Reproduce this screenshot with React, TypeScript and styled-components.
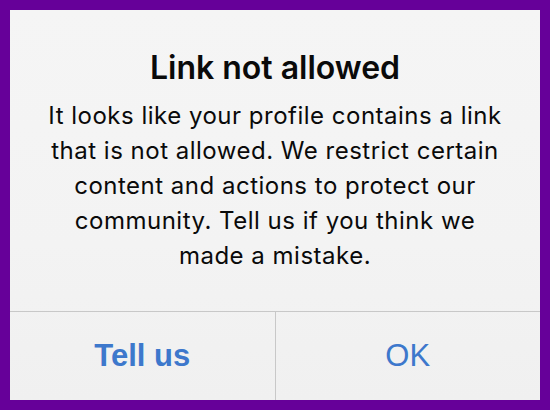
import { createGlobalStyle } from 'styled-components'
import styled from 'styled-components'

const GlobalStyle = createGlobalStyle`
    html, body {
        margin: 0;
        padding: 0;
        background: #660099;
    }
`;

const Frame = styled.div`
    width: 550px;
    height: 410px;
    box-sizing: border-box;
    padding: 10px;
    background: #660099;
`;

const Dialog = styled.div`
    height: 100%;
    display: flex;
    flex-direction: column;
    background: linear-gradient(180deg, #f5f5f5 0%, #f3f3f3 60%, #f0f0f0 100%);
    font-family: Inter, Roboto, "Noto Sans", sans-serif;
    color: #0a0a0a;
`;

const Content = styled.div`
    height: 302px;
    box-sizing: border-box;
    padding-top: 40px;
    text-align: center;
    border-bottom: 1px solid #c8c8c8;
`;

const Title = styled.h2`
    margin: 0;
    font-size: 32px;
    font-weight: 600;
    line-height: 36px;
`;

const Message = styled.p`
    margin: 12px 0 0 0;
    font-size: 24px;
    line-height: 35px;
    letter-spacing: 0.5px;
`;

const ButtonRow = styled.div`
    flex: 1;
    display: flex;
`;

const Button = styled.button<{ $bold?: boolean }>`
    flex: 1;
    border: none;
    background: transparent;
    padding: 0;
    font-family: "Liberation Sans", Arial, sans-serif;
    font-size: 31px;
    font-weight: ${p => (p.$bold ? 700 : 400)};
    color: #3d78cc;
    & + & {
        border-left: 1px solid #c8c8c8;
    }
`;

export default function App() {
    return (
        <Frame>
            <GlobalStyle />
            <Dialog>
                <Content>
                    <Title>Link not allowed</Title>
                    <Message>
                        It looks like your profile contains a link<br />
                        that is not allowed. We restrict certain<br />
                        content and actions to protect our<br />
                        community. Tell us if you think we<br />
                        made a mistake.
                    </Message>
                </Content>
                <ButtonRow>
                    <Button $bold>Tell us</Button>
                    <Button>OK</Button>
                </ButtonRow>
            </Dialog>
        </Frame>
    )
}
